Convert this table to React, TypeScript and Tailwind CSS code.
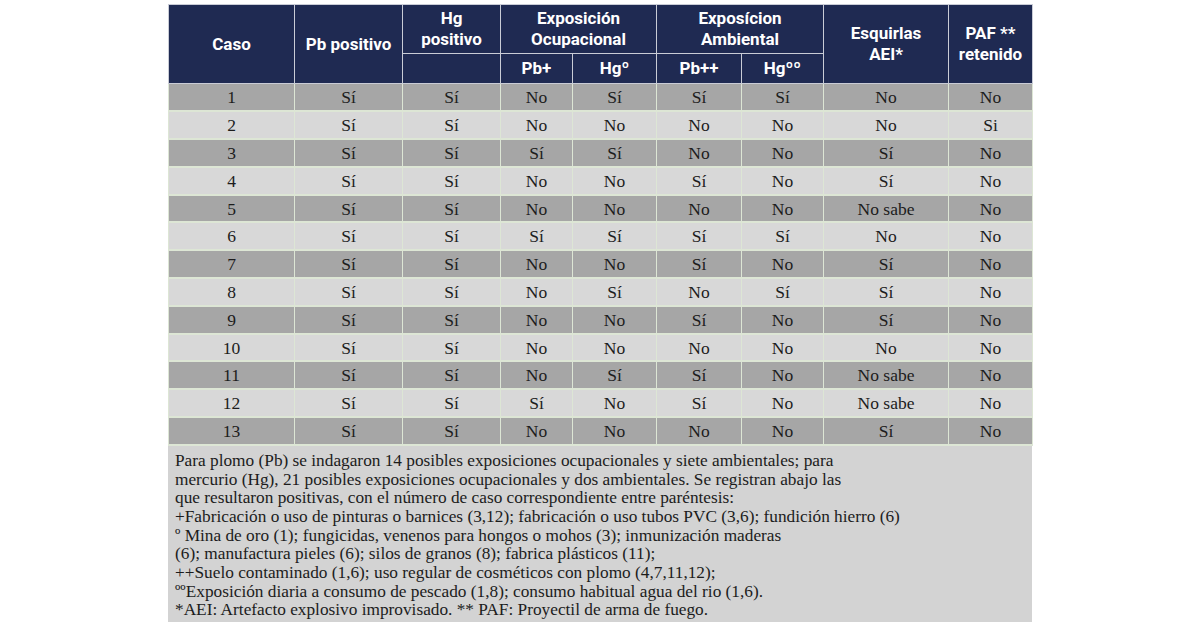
const rows = [
  ["1", "Sí", "Sí", "No", "Sí", "Sí", "Sí", "No", "No"],
  ["2", "Sí", "Sí", "No", "No", "No", "No", "No", "Si"],
  ["3", "Sí", "Sí", "Sí", "Sí", "No", "No", "Sí", "No"],
  ["4", "Sí", "Sí", "No", "No", "Sí", "No", "Sí", "No"],
  ["5", "Sí", "Sí", "No", "No", "No", "No", "No sabe", "No"],
  ["6", "Sí", "Sí", "Sí", "Sí", "Sí", "Sí", "No", "No"],
  ["7", "Sí", "Sí", "No", "No", "Sí", "No", "Sí", "No"],
  ["8", "Sí", "Sí", "No", "Sí", "No", "Sí", "Sí", "No"],
  ["9", "Sí", "Sí", "No", "No", "Sí", "No", "Sí", "No"],
  ["10", "Sí", "Sí", "No", "No", "No", "No", "No", "No"],
  ["11", "Sí", "Sí", "No", "Sí", "Sí", "No", "No sabe", "No"],
  ["12", "Sí", "Sí", "Sí", "No", "Sí", "No", "No sabe", "No"],
  ["13", "Sí", "Sí", "No", "No", "No", "No", "Sí", "No"],
];

const widths = [126, 108, 98, 72, 84, 85, 82, 125, 84];

const notes = [
  "Para plomo (Pb) se indagaron 14 posibles exposiciones ocupacionales y siete ambientales; para",
  "mercurio (Hg), 21 posibles exposiciones ocupacionales y dos ambientales. Se registran abajo las",
  "que resultaron positivas, con el número de caso correspondiente entre paréntesis:",
  "+Fabricación o uso de pinturas o barnices (3,12); fabricación o uso tubos PVC (3,6); fundición hierro (6)",
  "º Mina de oro (1); fungicidas, venenos para hongos o mohos (3); inmunización maderas",
  "(6); manufactura pieles (6); silos de granos (8); fabrica plásticos (11);",
  "++Suelo contaminado (1,6); uso regular de cosméticos con plomo (4,7,11,12);",
  "ººExposición diaria a consumo de pescado (1,8); consumo habitual agua del rio (1,6).",
  "*AEI: Artefacto explosivo improvisado. ** PAF: Proyectil de arma de fuego.",
];

const th =
  "border border-[#c9ccd6] text-center align-middle font-bold text-white text-[17px] leading-[21px] px-1";

export default function App() {
  return (
    <div className="w-[1200px] h-[635px] bg-white flex justify-center pt-1">
      <div className="w-[864px]">
        <table
          className="table-fixed border-collapse w-[864px]"
          style={{ fontFamily: "Roboto, 'Liberation Sans', sans-serif" }}
        >
          <colgroup>
            {widths.map((w, i) => (
              <col key={i} style={{ width: w }} />
            ))}
          </colgroup>
          <thead className="bg-[#1f2a52]">
            <tr className="h-[49px]">
              <th rowSpan={2} className={th}>Caso</th>
              <th rowSpan={2} className={th}>Pb positivo</th>
              <th className={th}>Hg<br />positivo</th>
              <th colSpan={2} className={th}>Exposición<br />Ocupacional</th>
              <th colSpan={2} className={th}>Exposícion<br />Ambiental</th>
              <th rowSpan={2} className={th}>Esquirlas<br />AEI*</th>
              <th rowSpan={2} className={th}>PAF **<br />retenido</th>
            </tr>
            <tr className="h-[30px]">
              <th className={th}></th>
              <th className={th}>Pb+</th>
              <th className={th}>Hgº</th>
              <th className={th}>Pb++</th>
              <th className={th}>Hgºº</th>
            </tr>
          </thead>
          <tbody style={{ fontFamily: "'Liberation Serif', serif" }}>
            {rows.map((r, i) => (
              <tr
                key={i}
                className={`h-[27.8px] ${i % 2 === 0 ? "bg-[#a6a6a6]" : "bg-[#d8d8d8]"}`}
              >
                {r.map((c, j) => (
                  <td
                    key={j}
                    className="border-x border-b-2 border-[#dde6d5] text-center text-[17.5px] leading-[20px] text-[#1c1c1c] p-0"
                  >
                    {c}
                  </td>
                ))}
              </tr>
            ))}
          </tbody>
        </table>
        <div
          className="bg-[#d3d3d3] h-[176px] pl-[7px] pt-[6px] text-[17.3px] leading-[18.7px] text-[#1c1c1c] whitespace-nowrap"
          style={{ fontFamily: "'Liberation Serif', serif" }}
        >
          {notes.map((n, i) => (
            <div key={i}>{n}</div>
          ))}
        </div>
      </div>
    </div>
  );
}
